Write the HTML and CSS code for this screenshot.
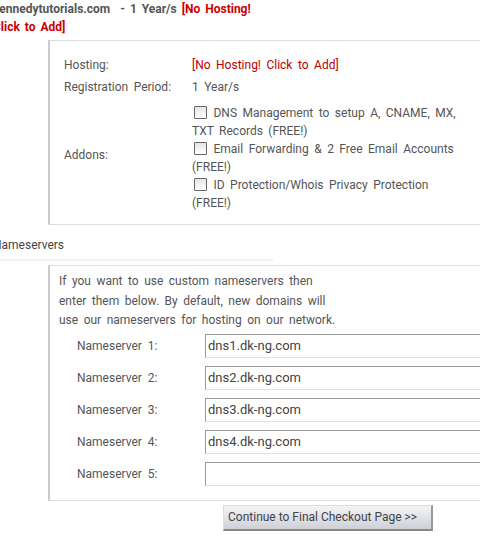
FILE: index.html
```html
<!DOCTYPE html>
<html>
<head>
<meta charset="utf-8">
<link rel="stylesheet" href="styles.css">
</head>
<body>
<div class="page">
  <div class="domain-line"><span class="domain">kennedytutorials.com</span> &nbsp;- 1 Year/s <span class="nohost">[No Hosting! Click to Add]</span></div>

  <div class="box box-config">
    <table class="config">
      <tr class="row-short"><td class="lbl">Hosting:</td><td class="val red">[No Hosting! Click to Add]</td></tr>
      <tr class="row-short"><td class="lbl">Registration Period:</td><td class="val">1 Year/s</td></tr>
      <tr>
        <td class="lbl">Addons:</td>
        <td class="val addons">
          <div><span class="cb"></span> DNS Management to setup A, CNAME, MX, TXT Records (FREE!)</div>
          <div><span class="cb"></span> Email Forwarding &amp; 2 Free Email Accounts (FREE!)</div>
          <div><span class="cb"></span> ID Protection/Whois Privacy Protection (FREE!)</div>
        </td>
      </tr>
    </table>
  </div>

  <div class="section-title">Nameservers</div>

  <div class="box box-ns">
    <p class="intro">If you want to use custom nameservers then enter them below. By default, new domains will use our nameservers for hosting on our network.</p>
    <div class="ns-list">
      <div class="ns-row"><span class="ns-lbl">Nameserver 1:</span><span class="ns-input">dns1.dk-ng.com</span></div>
      <div class="ns-row"><span class="ns-lbl">Nameserver 2:</span><span class="ns-input">dns2.dk-ng.com</span></div>
      <div class="ns-row"><span class="ns-lbl">Nameserver 3:</span><span class="ns-input">dns3.dk-ng.com</span></div>
      <div class="ns-row"><span class="ns-lbl">Nameserver 4:</span><span class="ns-input">dns4.dk-ng.com</span></div>
      <div class="ns-row"><span class="ns-lbl">Nameserver 5:</span><span class="ns-input"></span></div>
    </div>
  </div>

  <div class="actions"><span class="btn">Continue to Final Checkout Page &gt;&gt;</span></div>
</div>
</body>
</html>
```

FILE: styles.css
```css
html, body {
  margin: 0;
  padding: 0;
  background: #fff;
  overflow: hidden;
}
body {
  font-family: Roboto, "Noto Sans", sans-serif;
  font-size: 12px;
  color: #555;
  width: 480px;
  height: 539px;
}
.page {
  margin-left: -7px;
  width: 600px;
}
.domain-line {
  width: 264px;
  line-height: 18px;
  font-weight: bold;
  color: #555;
  word-spacing: 2px;
}
.nohost { color: #c00; }
.box {
  margin-left: 55px;
  border: 1px solid #ddd;
  border-left: 2px solid #ccc;
}
.box-config {
  margin-top: 4px;
  padding: 13px 0 12px 14px;
}
.config {
  border-collapse: collapse;
  word-spacing: 2.5px;
}
.config td { padding: 0; vertical-align: middle; }
.row-short td { height: 22px; }
.lbl { width: 128px; }
.val { width: 272px; }
.red { color: #b00; }
.addons { line-height: 18px; padding-top: 6px !important; }
.cb {
  display: inline-block;
  width: 11px;
  height: 11px;
  border: 1px solid #666;
  border-radius: 1px;
  background: linear-gradient(#e4e4e4, #fff);
  vertical-align: -2px;
  margin-left: 2px;
  margin-right: 1px;
}
.section-title {
  margin-top: 11px;
  width: 280px;
  line-height: 18px;
  padding-bottom: 5px;
  border-bottom: 2px solid #f2f2f2;
  color: #444;
}
.box-ns {
  margin-top: 4px;
  padding: 6px 0 14px 9px;
}
.intro {
  margin: 0;
  width: 284px;
  line-height: 19.5px;
  word-spacing: 2.5px;
}
.ns-list {
  margin-top: 3px;
  display: flex;
  flex-direction: column;
  gap: 8px;
}
.ns-row {
  display: flex;
  align-items: center;
}
.ns-lbl {
  width: 128px;
  padding-left: 18px;
  word-spacing: 3px;
}
.ns-input {
  width: 300px;
  height: 22px;
  line-height: 22px;
  border: 1px solid #ddd;
  border-top-color: #999;
  border-left-color: #999;
  padding-left: 2px;
  font-size: 13px;
  color: #444;
}
.actions {
  margin-top: 4px;
  padding-left: 230px;
}
.btn {
  display: inline-block;
  width: 203px;
  height: 23px;
  line-height: 23px;
  padding-left: 4px;
  border: 1px solid #ddd;
  border-right: 2px solid #999;
  border-bottom: 2px solid #888;
  background: linear-gradient(#f4f4f8, #cfd0d8);
  color: #444;
}
```
